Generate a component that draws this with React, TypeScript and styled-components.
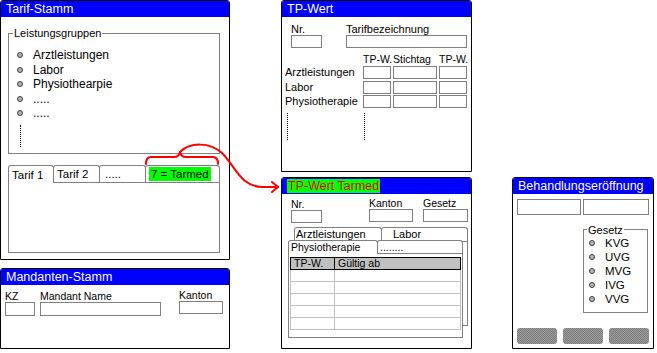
import styled, { createGlobalStyle } from 'styled-components';

const GlobalStyle = createGlobalStyle`
  html, body {
    margin: 0;
    padding: 0;
    background: #ffffff;
  }
  body {
    font-family: "Liberation Sans", Arial, sans-serif;
    color: #000000;
  }
`;

// the desktop is a free canvas, windows sit at their own coordinates
const Desktop = styled.div`
  position: relative;
  width: 657px;
  height: 353px;
  overflow: hidden;
  background: #ffffff;
`;

type Place = { $x: number; $y: number; $w: number; $h: number };

const Window = styled.div<Place>`
  position: absolute;
  left: ${(p) => p.$x}px;
  top: ${(p) => p.$y}px;
  width: ${(p) => p.$w}px;
  height: ${(p) => p.$h}px;
  box-sizing: border-box;
  border: 1px solid #000000;
  border-radius: 3px 3px 0 0;
  background: #ffffff;
  display: flex;
  flex-direction: column;
  overflow: hidden;
`;

const TitleBar = styled.div`
  flex: none;
  height: 16px;
  padding-left: 5px;
  background: #0000ff;
  color: #ffffff;
  font-size: 12.5px;
  line-height: 16px;
  white-space: nowrap;
`;

const TitleMark = styled.span`
  display: inline-block;
  margin-top: 1px;
  padding: 0 1px;
  background: #00ff00;
  color: #ee0000;
  line-height: 14px;
  vertical-align: top;
`;

const Body = styled.div<{ $pad: string }>`
  flex: 1;
  min-height: 0;
  display: flex;
  flex-direction: column;
  padding: ${(p) => p.$pad};
`;

/* group box */
const GroupBox = styled.fieldset<{ $h: number; $w?: number; $mt?: number; $mr?: number }>`
  box-sizing: border-box;
  height: ${(p) => p.$h}px;
  ${(p) => (p.$w ? `width: ${p.$w}px;` : '')}
  margin: ${(p) => p.$mt ?? 0}px ${(p) => p.$mr ?? 0}px 0 0;
  padding: 0;
  min-width: 0;
  border: 1px solid #808080;
  align-self: ${(p) => (p.$w ? 'flex-end' : 'stretch')};
`;

const GroupLegend = styled.legend<{ $ml: number }>`
  margin-left: ${(p) => p.$ml}px;
  padding: 0 1px;
  font-size: 11px;
  line-height: 12px;
`;

const RadioList = styled.div<{ $pad: string }>`
  display: flex;
  flex-direction: column;
  padding: ${(p) => p.$pad};
`;

const RadioRow = styled.div<{ $h: number; $gap: number; $size: number }>`
  display: flex;
  align-items: center;
  height: ${(p) => p.$h}px;
  gap: ${(p) => p.$gap}px;
  font-size: ${(p) => p.$size}px;
  white-space: nowrap;
`;

const RadioDot = styled.span`
  flex: none;
  width: 6px;
  height: 6px;
  box-sizing: border-box;
  border-radius: 50%;
  border: 1px solid #404040;
  background: #b4b4b4;
`;

const VDots = styled.div<{ $h: number; $m: string }>`
  width: 0;
  height: ${(p) => p.$h}px;
  margin: ${(p) => p.$m};
  border-left: 1px dotted #000000;
`;

/* tabs */
const TabStrip = styled.div<{ $mt?: number }>`
  display: flex;
  align-items: flex-end;
  position: relative;
  z-index: 1;
  margin-top: ${(p) => p.$mt ?? 0}px;
`;

const Tab = styled.div<{ $w: number; $h: number; $active?: boolean; $pl: number; $pt: number; $size: number }>`
  box-sizing: border-box;
  width: ${(p) => p.$w}px;
  height: ${(p) => (p.$active ? p.$h + 1 : p.$h)}px;
  margin-bottom: ${(p) => (p.$active ? -1 : 0)}px;
  padding: ${(p) => p.$pt}px 0 0 ${(p) => p.$pl}px;
  border: 1px solid #808080;
  border-bottom: none;
  border-radius: 3px 3px 0 0;
  background: #ffffff;
  font-size: ${(p) => p.$size}px;
  line-height: 12px;
  white-space: nowrap;
  & + & {
    margin-left: -1px;
  }
`;

const TabGreen = styled.span`
  display: inline-block;
  margin-top: 1px;
  padding: 0 2px;
  background: #00ff00;
  line-height: 14px;
  vertical-align: top;
`;

const TabPanel = styled.div<{ $h: number; $pad?: string }>`
  box-sizing: border-box;
  height: ${(p) => p.$h}px;
  padding: ${(p) => p.$pad ?? '0'};
  border: 1px solid #808080;
  background: #ffffff;
`;

const TabStack = styled.div<{ $mt: number }>`
  display: grid;
  margin-top: ${(p) => p.$mt}px;
`;

const TabLayer = styled.div<{ $ml: number; $mt: number; $w: number }>`
  grid-area: 1 / 1;
  width: ${(p) => p.$w}px;
  margin: ${(p) => p.$mt}px 0 0 ${(p) => p.$ml}px;
  display: flex;
  flex-direction: column;
`;

/* form fields */
const FieldRow = styled.div<{ $pl?: number; $gap?: number }>`
  display: flex;
  align-items: flex-start;
  gap: ${(p) => p.$gap ?? 0}px;
  padding-left: ${(p) => p.$pl ?? 0}px;
`;

const Field = styled.div<{ $w: number; $shift?: number; $ml?: number; $push?: boolean }>`
  display: flex;
  flex-direction: column;
  width: ${(p) => p.$w}px;
  margin-top: ${(p) => p.$shift ?? 0}px;
  margin-left: ${(p) => (p.$push ? 'auto' : `${p.$ml ?? 0}px`)};
`;

const FieldLabel = styled.div<{ $size: number }>`
  font-size: ${(p) => p.$size}px;
  line-height: 12px;
  white-space: nowrap;
`;

const TextBox = styled.div<{ $h: number; $w?: number }>`
  box-sizing: border-box;
  height: ${(p) => p.$h}px;
  ${(p) => (p.$w ? `width: ${p.$w}px;` : '')}
  border: 1px solid #808080;
  background: #ffffff;
`;

/* TP-Wert rate grid */
const RateGrid = styled.div`
  display: grid;
  grid-template-columns: 76px 28px 44px 28px;
  grid-template-rows: 13px repeat(3, 14.7px) auto;
  column-gap: 2px;
  align-items: start;
  margin-top: 5px;
  font-size: 11px;
`;

const RateHead = styled.div`
  font-size: 10.5px;
  line-height: 13px;
  white-space: nowrap;
`;

const RateLabel = styled.div`
  line-height: 13px;
  white-space: nowrap;
`;

/* Tarmed table */
const DataTable = styled.div`
  display: grid;
  grid-template-columns: 45px 126px;
`;

const HeadCell = styled.div<{ $first?: boolean }>`
  height: 13px;
  box-sizing: border-box;
  padding-left: 3px;
  background: #c0c0c0;
  border-top: 1px solid #000000;
  border-bottom: 1px solid #000000;
  border-right: 1px solid #000000;
  ${(p) => (p.$first ? 'border-left: 1px solid #000000;' : '')}
  font-size: 10.5px;
  line-height: 11px;
  white-space: nowrap;
`;

const DataCell = styled.div<{ $first?: boolean }>`
  height: 12px;
  box-sizing: border-box;
  border-bottom: 1px solid #c0c0c0;
  border-right: 1px solid #c0c0c0;
  ${(p) => (p.$first ? 'border-left: 1px solid #c0c0c0;' : '')}
`;

/* buttons */
const ButtonRow = styled.div`
  display: flex;
  justify-content: space-between;
  margin-top: auto;
`;

const GreyButton = styled.div`
  width: 40px;
  height: 16px;
  border-radius: 3px;
  background-color: #8a8a8a;
  background-image: repeating-conic-gradient(#7c7c7c 0 25%, #9c9c9c 0 50%);
  background-size: 2px 2px;
`;

const Overlay = styled.svg`
  position: absolute;
  left: 0;
  top: 0;
  width: 657px;
  height: 353px;
  pointer-events: none;
  z-index: 5;
`;

const leistungen = ['Arztleistungen', 'Labor', 'Physiothearpie', '.....', '.....'];
const gesetze = ['KVG', 'UVG', 'MVG', 'IVG', 'VVG'];
const rates = ['Arztleistungen', 'Labor', 'Physiotherapie'];

export default function App() {
  return (
    <>
      <GlobalStyle />
      <Desktop>
        <Window $x={0} $y={0} $w={230} $h={260}>
          <TitleBar>Tarif-Stamm</TitleBar>
          <Body $pad="10px 9px 0 7px">
            <GroupBox $h={127}>
              <GroupLegend $ml={4}>Leistungsgruppen</GroupLegend>
              <RadioList $pad="9px 0 0 8px">
                {leistungen.map((l, i) => (
                  <RadioRow key={i} $h={14.5} $gap={10} $size={12}>
                    <RadioDot />
                    {l}
                  </RadioRow>
                ))}
                <VDots $h={22} $m="4px 0 0 3px" />
              </RadioList>
            </GroupBox>
            <TabStrip $mt={11}>
              <Tab $w={46} $h={17} $active $pl={3} $pt={3} $size={11.5}>Tarif 1</Tab>
              <Tab $w={47} $h={17} $pl={3} $pt={2} $size={11.5}>Tarif 2</Tab>
              <Tab $w={47} $h={17} $pl={5} $pt={2} $size={11.5}>.....</Tab>
              <Tab $w={75} $h={17} $pl={3} $pt={0} $size={11.5}>
                <TabGreen>7 = Tarmed</TabGreen>
              </Tab>
            </TabStrip>
            <TabPanel $h={71} />
          </Body>
        </Window>

        <Window $x={0} $y={268} $w={230} $h={81}>
          <TitleBar>Mandanten-Stamm</TitleBar>
          <Body $pad="5px 6px 0 4px">
            <FieldRow $gap={5}>
              <Field $w={30}>
                <FieldLabel $size={10.5}>KZ</FieldLabel>
                <TextBox $h={14} />
              </Field>
              <Field $w={121}>
                <FieldLabel $size={10.5}>Mandant Name</FieldLabel>
                <TextBox $h={14} />
              </Field>
              <Field $w={44} $shift={-1} $push>
                <FieldLabel $size={10.5}>Kanton</FieldLabel>
                <TextBox $h={13} />
              </Field>
            </FieldRow>
          </Body>
        </Window>

        <Window $x={281} $y={0} $w={191} $h={172}>
          <TitleBar>TP-Wert</TitleBar>
          <Body $pad="6px 4px 0 3px">
            <FieldRow $pl={6} $gap={24}>
              <Field $w={31}>
                <FieldLabel $size={11}>Nr.</FieldLabel>
                <TextBox $h={13} />
              </Field>
              <Field $w={121}>
                <FieldLabel $size={11}>Tarifbezeichnung</FieldLabel>
                <TextBox $h={13} />
              </Field>
            </FieldRow>
            <RateGrid>
              <span />
              <RateHead>TP-W.</RateHead>
              <RateHead>Stichtag</RateHead>
              <RateHead>TP-W.</RateHead>
              {rates.map((r) => (
                <>
                  <RateLabel key={r}>{r}</RateLabel>
                  <TextBox $h={13} />
                  <TextBox $h={13} />
                  <TextBox $h={13} />
                </>
              ))}
              <VDots $h={27} $m="3px 0 0 2px" />
              <VDots $h={27} $m="3px 0 0 1px" />
            </RateGrid>
          </Body>
        </Window>

        <Window $x={281} $y={177} $w={191} $h={172}>
          <TitleBar>
            <TitleMark>TP-Wert Tarmed</TitleMark>
          </TitleBar>
          <Body $pad="3px 0 0 0">
            <FieldRow $pl={9}>
              <Field $w={31} $shift={1}>
                <FieldLabel $size={10.5}>Nr.</FieldLabel>
                <TextBox $h={13} />
              </Field>
              <Field $w={44} $ml={47}>
                <FieldLabel $size={10.5}>Kanton</FieldLabel>
                <TextBox $h={13} />
              </Field>
              <Field $w={45} $ml={10}>
                <FieldLabel $size={10.5}>Gesetz</FieldLabel>
                <TextBox $h={13} />
              </Field>
            </FieldRow>
            <TabStack $mt={4}>
              <TabLayer $ml={12} $mt={0} $w={174}>
                <TabStrip>
                  <Tab $w={88} $h={14} $pl={1} $pt={0} $size={11}>Arztleistungen</Tab>
                  <Tab $w={87} $h={14} $pl={11} $pt={0} $size={11}>Labor</Tab>
                </TabStrip>
                <TabPanel $h={85} />
              </TabLayer>
              <TabLayer $ml={6} $mt={13} $w={175}>
                <TabStrip>
                  <Tab $w={90} $h={13} $active $pl={2} $pt={0} $size={10.5}>Physiotherapie</Tab>
                  <Tab $w={86} $h={13} $pl={2} $pt={0} $size={10.5}>........</Tab>
                </TabStrip>
                <TabPanel $h={85} $pad="3px 0 0 1px">
                  <DataTable>
                    <HeadCell $first>TP-W.</HeadCell>
                    <HeadCell>Gültig ab</HeadCell>
                    {[0, 1, 2, 3, 4].map((i) => (
                      <>
                        <DataCell key={`a${i}`} $first />
                        <DataCell key={`b${i}`} />
                      </>
                    ))}
                  </DataTable>
                </TabPanel>
              </TabLayer>
            </TabStack>
          </Body>
        </Window>

        <Window $x={512} $y={177} $w={142} $h={172}>
          <TitleBar>Behandlungseröffnung</TitleBar>
          <Body $pad="5px 4px 4px 4px">
            <FieldRow $gap={2}>
              <TextBox $h={16} $w={64} />
              <TextBox $h={16} $w={66} />
            </FieldRow>
            <GroupBox $h={89.5} $w={65} $mt={8.5} $mr={1}>
              <GroupLegend $ml={3}>Gesetz</GroupLegend>
              <RadioList $pad="0 0 0 5px">
                {gesetze.map((g) => (
                  <RadioRow key={g} $h={14} $gap={10} $size={11.5}>
                    <RadioDot />
                    {g}
                  </RadioRow>
                ))}
              </RadioList>
            </GroupBox>
            <ButtonRow>
              <GreyButton />
              <GreyButton />
              <GreyButton />
            </ButtonRow>
          </Body>
        </Window>

        <Overlay viewBox="0 0 657 353">
          <g fill="none" stroke="#ff0000" strokeWidth={2} strokeLinejoin="round" strokeLinecap="round">
            <path d="M146 164 Q146 157 151 157 L174 157 Q179 157 180 152 Q181 157 186 157 L213 157 Q218 157 218 164" />
            <path d="M180 152 C190 142 210 142 222 153 C236 167 240 186 262 187 L278 187" />
            <path d="M272 182 L278 187 L272 192" />
          </g>
        </Overlay>
      </Desktop>
    </>
  );
}
